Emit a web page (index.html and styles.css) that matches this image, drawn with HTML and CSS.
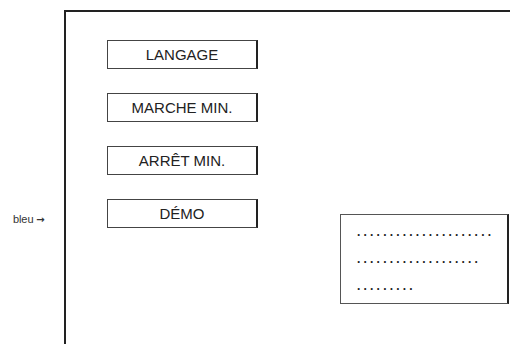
FILE: index.html
```html
<!DOCTYPE html>
<html lang="fr">
<head>
<meta charset="utf-8">
<title>Menu</title>
<link rel="stylesheet" href="styles.css">
</head>
<body>
<div class="page">
  <div class="side">
    <span class="note">bleu <span class="arrow">→</span></span>
  </div>
  <div class="frame">
    <div class="menu">
      <div class="btn">LANGAGE</div>
      <div class="btn">MARCHE MIN.</div>
      <div class="btn">ARRÊT MIN.</div>
      <div class="btn">DÉMO</div>
    </div>
    <div class="info">
      <div class="dots">.....................</div>
      <div class="dots">...................</div>
      <div class="dots">.........</div>
    </div>
  </div>
</div>
</body>
</html>
```

FILE: styles.css
```css
html, body {
  margin: 0;
  padding: 0;
  background: #fff;
}
body {
  font-family: "Liberation Sans", Arial, sans-serif;
  color: #222;
  width: 510px;
  height: 344px;
  overflow: hidden;
}
.page {
  display: flex;
  padding-top: 10px;
  height: 334px;
}
.side {
  width: 64px;
  flex: none;
  padding-top: 203px;
  box-sizing: border-box;
}
.note {
  display: block;
  padding-left: 13px;
  font-size: 11px;
  letter-spacing: -0.1px;
  color: #333;
}
.arrow {
  font-family: "DejaVu Sans", sans-serif;
  font-weight: bold;
  font-size: 10px;
}
.frame {
  flex: 1;
  border-top: 2px solid #222;
  border-left: 2px solid #222;
  display: flex;
  padding: 28px 0 0 41px;
}
.menu {
  display: flex;
  flex-direction: column;
  gap: 24px;
  width: 151px;
}
.btn {
  height: 29px;
  box-sizing: border-box;
  border: 1px solid #444;
  border-right: 2px solid #222;
  display: flex;
  align-items: center;
  justify-content: center;
  font-size: 15px;
  letter-spacing: 0;
  color: #222;
}
.info {
  margin: 174px 0 0 82px;
  width: 169px;
  height: 90px;
  box-sizing: border-box;
  border: 1px solid #555;
  border-right: 2px solid #222;
  padding: 11px 0 0 16px;
  display: flex;
  flex-direction: column;
  gap: 15px;
}
.dots {
  font-size: 12px;
  line-height: 12px;
  letter-spacing: 3.2px;
  font-weight: bold;
  color: #222;
}
```
